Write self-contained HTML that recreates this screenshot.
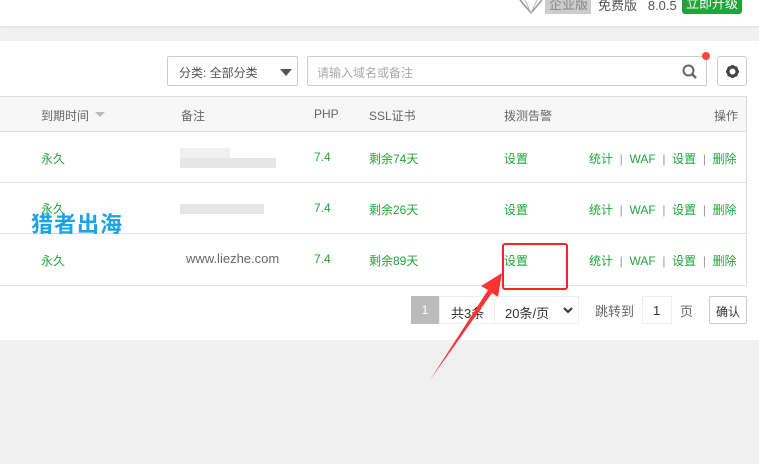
<!DOCTYPE html>
<html><head><meta charset="utf-8"><style>
*{margin:0;padding:0;box-sizing:border-box}
body{width:759px;height:464px;overflow:hidden;background:#f0f0f0;font-family:"Liberation Sans","Noto Sans CJK SC",sans-serif;font-size:12px;color:#666;position:relative}
.abs{position:absolute}
.top{left:0;top:0;width:759px;height:26px;background:#fff;box-shadow:0 1px 2px #ddd}
.panel{left:0;top:41px;width:759px;height:299px;background:#fff}
.g{color:#20a53a}
.hdr{left:0;top:96px;width:747px;height:36px;background:#f7f7f7;border-top:1px solid #ddd;border-bottom:1px solid #ddd;border-right:1px solid #ddd}
.row{left:0;width:747px;height:51px;border-bottom:1px solid #ddd;border-right:1px solid #ddd}
.t{position:absolute;white-space:nowrap}
.blur{position:absolute;background:#e6e6e6;height:10px}
.box{position:absolute;border:1px solid #ddd;background:#fff}
</style></head><body>
<div class="abs top">
 <svg class="abs" style="left:518px;top:0" width="26" height="14"><path d="M2 0 L13 13 L24 0" fill="none" stroke="#999" stroke-width="1.5"/><path d="M7 0 L13 13 L19 0" fill="none" stroke="#bbb"/></svg>
 <div class="abs" style="left:545px;top:0;width:46px;height:14px;background:#ccc;color:#888;font-size:13px;line-height:10px;padding-left:4px">企业版</div>
 <div class="t" style="left:598px;top:-5px;font-size:13px;color:#555">免费版&nbsp;&nbsp;&nbsp;8.0.5</div>
 <div class="abs" style="left:682px;top:0;width:60px;height:14px;background:#20a53a;color:#fff;border-radius:0 0 3px 3px;font-size:13px;line-height:8px;text-align:center">立即升级</div>
</div>
<div class="abs panel"></div>
<div class="box" style="left:167px;top:56px;width:131px;height:30px;border-color:#ccc;border-radius:2px"><span class="t" style="left:11px;top:7px;color:#555">分类: 全部分类</span><span class="t" style="left:112px;top:12px;width:0;height:0;border:6px solid transparent;border-top:7px solid #555;border-bottom:0"></span></div>
<div class="box" style="left:307px;top:56px;width:400px;height:30px;border-color:#ccc;border-radius:2px"><span class="t" style="left:9px;top:7px;color:#aaa">请输入域名或备注</span>
<svg class="t" style="left:374px;top:7px" width="16" height="16"><circle cx="6.5" cy="6.5" r="5" fill="none" stroke="#666" stroke-width="2"/><path d="M10 10 L14 14" stroke="#666" stroke-width="2.5"/></svg></div>
<div class="abs" style="left:702px;top:52px;width:8px;height:8px;border-radius:50%;background:#f44"></div>
<div class="box" style="left:717px;top:56px;width:30px;height:30px;border-color:#ccc;border-radius:3px"><svg class="t" style="left:7px;top:7px" width="15" height="15"><circle cx="7.5" cy="7.5" r="4.5" fill="none" stroke="#444" stroke-width="3"/><g stroke="#444" stroke-width="2.5"><path d="M7.5 1v3M7.5 11v3M1 7.5h3M11 7.5h3M3 3l2 2M10 10l2 2M12 3l-2 2M3 12l2-2"/></g></svg></div>

<div class="abs hdr">
 <span class="t" style="left:41px;top:10px">到期时间</span><span class="t" style="left:95px;top:15px;border:5px solid transparent;border-top:5px solid #bbb;border-bottom:0"></span>
 <span class="t" style="left:181px;top:10px">备注</span>
 <span class="t" style="left:314px;top:10px">PHP</span>
 <span class="t" style="left:369px;top:10px">SSL证书</span>
 <span class="t" style="left:504px;top:10px">拨测告警</span>
 <span class="t" style="left:714px;top:10px">操作</span>
</div>
<div class="abs row" style="top:132px">
 <span class="t g" style="left:41px;top:18px">永久</span>
 <div class="blur" style="left:180px;top:16px;width:50px;background:#f0f0f0"></div>
 <div class="blur" style="left:180px;top:26px;width:96px"></div>
 <span class="t g" style="left:314px;top:18px">7.4</span><span class="t g" style="left:369px;top:18px">剩余74天</span>
 <span class="t g" style="left:504px;top:18px">设置</span>
 <span class="t g" style="left:589px;top:18px">统计 <span style="color:#999">&nbsp;|&nbsp;</span> WAF <span style="color:#999">&nbsp;|&nbsp;</span> 设置 <span style="color:#999">&nbsp;|&nbsp;</span> 删除</span>
</div>
<div class="abs row" style="top:183px">
 <span class="t g" style="left:41px;top:17px">永久</span>
 <div class="blur" style="left:180px;top:21px;width:84px"></div>
 <span class="t g" style="left:314px;top:18px">7.4</span><span class="t g" style="left:369px;top:18px">剩余26天</span>
 <span class="t g" style="left:504px;top:18px">设置</span>
 <span class="t g" style="left:589px;top:18px">统计 <span style="color:#999">&nbsp;|&nbsp;</span> WAF <span style="color:#999">&nbsp;|&nbsp;</span> 设置 <span style="color:#999">&nbsp;|&nbsp;</span> 删除</span>
 <span class="t" style="left:31px;top:31px;font-size:22px;line-height:22px;font-weight:bold;color:#1aa3e8;letter-spacing:1px">猎者出海</span>
</div>
<div class="abs row" style="top:235px">
 <span class="t g" style="left:41px;top:17px">永久</span>
 <span class="t" style="left:186px;top:16px;font-size:13px">www.liezhe.com</span>
 <span class="t g" style="left:314px;top:17px">7.4</span><span class="t g" style="left:369px;top:17px">剩余89天</span>
 <span class="t g" style="left:504px;top:17px">设置</span>
 <span class="t g" style="left:589px;top:17px">统计 <span style="color:#999">&nbsp;|&nbsp;</span> WAF <span style="color:#999">&nbsp;|&nbsp;</span> 设置 <span style="color:#999">&nbsp;|&nbsp;</span> 删除</span>
</div>
<div class="abs" style="left:502px;top:243px;width:66px;height:47px;border:2px solid #f22;border-radius:3px"></div>

<div class="abs" style="left:411px;top:296px;width:28px;height:28px;background:#bbb;color:#fff;text-align:center;line-height:28px">1</div>
<div class="box" style="left:439px;top:296px;width:56px;height:28px;border-color:#eee"><span class="t" style="left:11px;top:6px;color:#333;font-size:13px">共3条</span></div>
<div class="box" style="left:494px;top:296px;width:85px;height:28px;border-color:#eee"><span class="t" style="left:10px;top:6px;color:#333;font-size:13px">20条/页</span><svg class="t" style="left:68px;top:10px" width="10" height="7"><path d="M1 1 L5 5 L9 1" fill="none" stroke="#333" stroke-width="2"/></svg></div>
<span class="t" style="left:595px;top:301px;font-size:13px">跳转到</span>
<div class="box" style="left:642px;top:296px;width:30px;height:28px;border-color:#eee"><span class="t" style="left:10px;top:6px;color:#333;font-size:13px">1</span></div>
<span class="t" style="left:680px;top:301px;font-size:13px">页</span>
<div class="box" style="left:709px;top:296px;width:38px;height:28px;border-color:#ccc;border-radius:2px"><span class="t" style="left:6px;top:6px;color:#333">确认</span></div>

<svg class="abs" style="left:425px;top:268px" width="80" height="115"><polygon points="5,112 63,22 56,18 77,5 73,29 67,25" fill="#f33"/></svg>
</body></html>
